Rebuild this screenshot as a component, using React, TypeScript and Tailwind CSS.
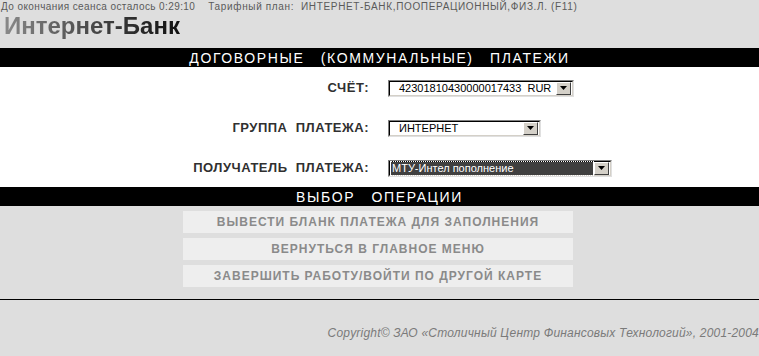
import React from "react";

const font = { fontFamily: '"Liberation Sans", Arial, sans-serif' };

// Win-classic style dropdown imitation
const FakeSelect: React.FC<{ value: string; width: string; selected?: boolean }> = ({ value, width, selected }) => (
  <div
    className={`flex items-center h-[17px] bg-white border border-t-[#808080] border-l-[#808080] border-b-[#e0e0e0] border-r-[#e0e0e0] ${width}`}
  >
    <div className="flex-1 h-full border border-t-black border-l-black border-b-[#d4d0c8] border-r-[#d4d0c8] flex items-center pl-[1px] pr-[1px]">
      <div
        className={`flex-1 h-[13px] flex items-center text-[11px] leading-none whitespace-pre ${
          selected
            ? "bg-[#404040] text-white outline outline-1 outline-dotted outline-white pl-[1px]"
            : "text-black pl-[8px]"
        }`}
      >
        {value}
      </div>
      <div className="w-[15px] h-[13px] ml-[1px] bg-[#d4d0c8] border border-t-white border-l-white border-b-[#404040] border-r-[#404040] flex items-center justify-center">
        <svg width="7" height="4" viewBox="0 0 7 4">
          <path d="M0 0h7L3.5 4z" fill="#000" />
        </svg>
      </div>
    </div>
  </div>
);

const Row: React.FC<{ label: string; children: React.ReactNode }> = ({ label, children }) => (
  <div className="flex items-center h-[20px]">
    <div className="w-[369px] text-right text-[13px] font-bold text-[#303030] whitespace-pre tracking-[0.5px]">
      {label}
    </div>
    <div className="ml-[19px]">{children}</div>
  </div>
);

const ActionButton: React.FC<{ text: string }> = ({ text }) => (
  <div className="w-[390px] h-[22px] bg-[#eeeeee] flex items-center justify-center text-[12px] font-bold text-[#8a8a8a] tracking-[1px]">
    {text}
  </div>
);

export default function App() {
  return (
    <div className="w-[759px] h-[356px] bg-[#dedede] flex flex-col overflow-hidden" style={font}>
      {/* header */}
      <div className="h-[48px] flex flex-col pl-[1px]">
        <div className="flex text-[10px] leading-none text-[#5a5a5a] tracking-[0.4px] pt-[2px] h-[12px] whitespace-pre">
          <span>До окончания сеанса осталось 0:29:10</span>
          <span className="ml-[13px] tracking-[0.65px]">Тарифный план:  ИНТЕРНЕТ-БАНК,ПООПЕРАЦИОННЫЙ,ФИЗ.Л. (F11)</span>
        </div>
        <div className="pl-[3px] mt-[1px] text-[24px] font-bold leading-[26px] bg-gradient-to-r from-[#8c8c8c] to-[#111111] bg-clip-text text-transparent w-fit">
          Интернет-Банк
        </div>
      </div>

      <div className="h-[19px] bg-black text-white flex items-center justify-center text-[14px] tracking-[1.6px] whitespace-pre leading-none">
        ДОГОВОРНЫЕ   (КОММУНАЛЬНЫЕ)   ПЛАТЕЖИ
      </div>

      {/* form */}
      <div className="bg-white h-[120px] flex flex-col pt-[11px] gap-[20px]">
        <Row label="СЧЁТ:">
          <FakeSelect value="42301810430000017433  RUR" width="w-[186px]" />
        </Row>
        <Row label="ГРУППА  ПЛАТЕЖА:">
          <FakeSelect value="ИНТЕРНЕТ" width="w-[153px]" />
        </Row>
        <Row label="ПОЛУЧАТЕЛЬ  ПЛАТЕЖА:">
          <FakeSelect value="МТУ-Интел пополнение" width="w-[224px]" selected />
        </Row>
      </div>

      <div className="h-[19px] bg-black text-white flex items-center justify-center text-[14px] tracking-[1.6px] whitespace-pre leading-none">
        ВЫБОР   ОПЕРАЦИИ
      </div>

      {/* actions */}
      <div className="flex flex-col gap-[5px] pl-[183px] pt-[5px]">
        <ActionButton text="ВЫВЕСТИ БЛАНК ПЛАТЕЖА ДЛЯ ЗАПОЛНЕНИЯ" />
        <ActionButton text="ВЕРНУТЬСЯ В ГЛАВНОЕ МЕНЮ" />
        <ActionButton text="ЗАВЕРШИТЬ РАБОТУ/ВОЙТИ ПО ДРУГОЙ КАРТЕ" />
      </div>

      <div className="mt-[12px] h-[1px] bg-black" />

      <div className="flex justify-end pt-[24px] text-[12px] italic text-[#7a7a7a] tracking-[0.2px] whitespace-pre">
        Copyright© ЗАО «Столичный Центр Финансовых Технологий», 2001-2004
      </div>
    </div>
  );
}
